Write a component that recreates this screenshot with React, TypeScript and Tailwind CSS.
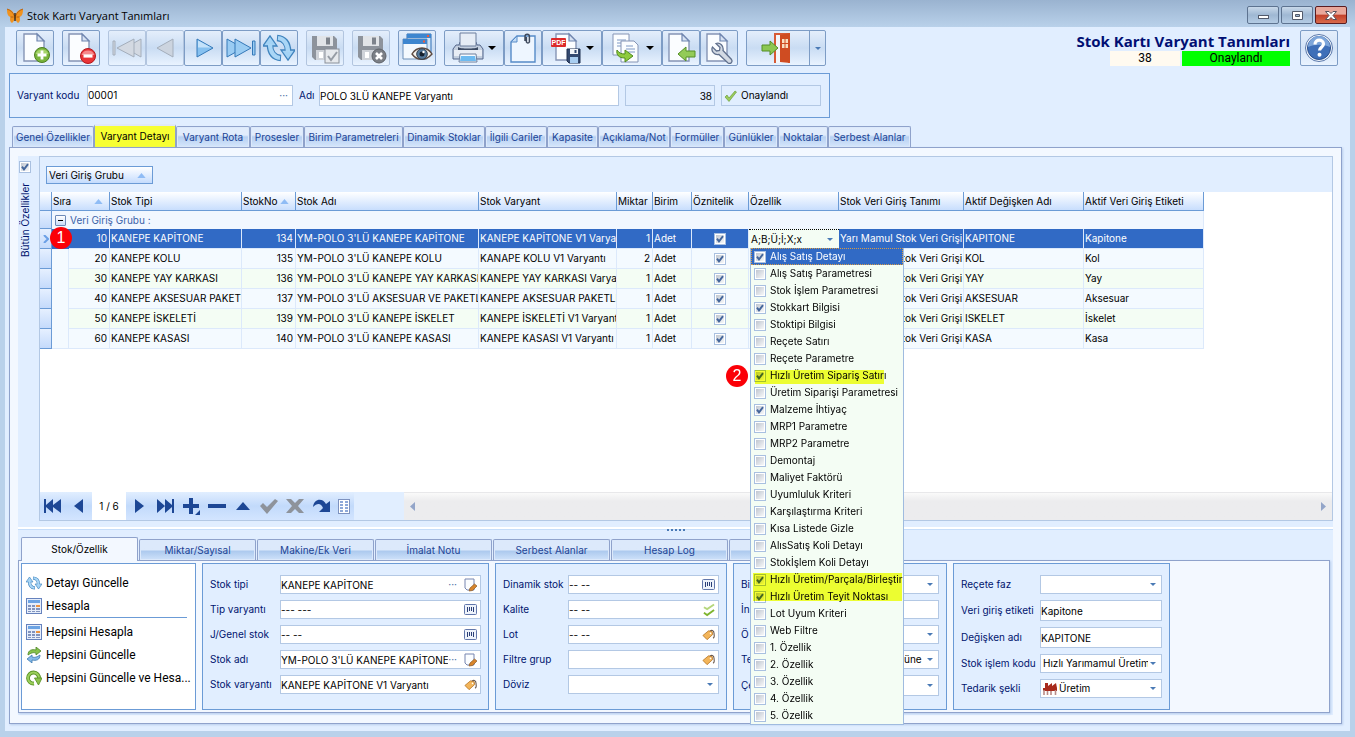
import React, { useState } from 'react';
import { clsx } from 'clsx';

type IconProps = { className?: string };

/* ---------- small shared pieces ---------- */

const Caret: React.FC<IconProps> = ({ className = 'text-[#4a7ab5]' }) => (
  <svg viewBox="0 0 8 4" className={clsx('h-[3px] w-[6px] shrink-0', className)}>
    <path d="M0 0h8L4 4z" fill="currentColor" />
  </svg>
);

const SortUp = () => (
  <svg viewBox="0 0 10 6" className="h-[5px] w-[9px] shrink-0">
    <path d="M0 6h10L5 0z" fill="#8fbcf5" />
  </svg>
);

const Check: React.FC<{ label: string; defaultChecked?: boolean; id?: string }> = ({ label, defaultChecked, id }) => (
  <span className="relative inline-block h-3 w-3 shrink-0 align-middle">
    <input
      id={id}
      type="checkbox"
      aria-label={label}
      defaultChecked={defaultChecked}
      className="peer block h-3 w-3 appearance-none border border-[#a9c0e0] bg-linear-to-br from-[#b9c0cb] to-white outline-1 -outline-offset-2 outline-white"
    />
    <svg viewBox="0 0 12 12" className="pointer-events-none absolute inset-0 hidden h-3 w-3 peer-checked:block">
      <path d="M3 5.6 5 8.4 9 3.2" fill="none" stroke="#44669b" strokeWidth="1.9" />
    </svg>
  </span>
);

const Badge: React.FC<{ n: number; className: string }> = ({ n, className }) => (
  <span
    className={clsx(
      "absolute z-20 flex h-[22px] w-[22px] items-center justify-center rounded-full bg-[#fb0007] font-['Liberation_Sans',sans-serif] text-base text-white",
      className
    )}
  >
    {n}
  </span>
);

/* ---------- toolbar icons ---------- */

const Page: React.FC<{ x?: number; y?: number; w?: number; h?: number }> = ({ x = 5, y = 2, w = 20, h = 27 }) => (
  <g>
    <path d={`M${x} ${y}h${w - 7}l7 7v${h - 7}h-${w}z`} fill="#fbfdff" stroke="#8594b5" strokeWidth="1.4" />
    <path d={`M${x + w - 7} ${y}v7h7z`} fill="#d7e2f2" stroke="#6f86b0" strokeWidth="1.2" />
  </g>
);

const Svg: React.FC<{ children: React.ReactNode; className?: string }> = ({ children, className = 'h-8 w-8' }) => (
  <svg viewBox="0 0 32 32" className={clsx('shrink-0', className)}>
    {children}
  </svg>
);

const NewIcon = () => (
  <Svg>
    <Page />
    <circle cx="23" cy="23" r="7.5" fill="#79b43c" stroke="#4d7f22" />
    <path d="M16.5 22a7 7 0 0 1 13 0z" fill="#a5d46b" />
    <path d="M23 18.5v9M18.5 23h9" stroke="#fff" strokeWidth="2.8" />
  </Svg>
);
const DeleteIcon = () => (
  <Svg>
    <Page x={4} />
    <circle cx="23" cy="24" r="7.5" fill="#e93438" stroke="#b3191e" />
    <path d="M16.5 23a7 7 0 0 1 13 0z" fill="#f68a8c" />
    <path d="M18.5 24h9" stroke="#fff" strokeWidth="3.2" />
  </Svg>
);
const FirstIcon = () => (
  <Svg>
    <g fill="#d3d9e2" stroke="#a4aebb">
      <path d="M2 9h2v14H2z" />
      <path d="M30 7v18l-16-9z" />
      <path d="M23 7v18L6 16z" />
    </g>
  </Svg>
);
const PrevIcon = () => (
  <Svg>
    <path d="M24 7v18L8 16z" fill="#ccd4df" stroke="#a4aebb" />
  </Svg>
);
const NextIcon = () => (
  <Svg>
    <path d="M10 7v18l16-9z" fill="#86c1f0" stroke="#3478b8" />
    <path d="M11 8.500v7h13z" fill="#c4e2fa" />
  </Svg>
);
const LastIcon = () => (
  <Svg>
    <g fill="#9accf3" stroke="#3478b8">
      <path d="M2 7v18l16-9z" />
      <path d="M10 7v18l16-9z" />
      <path d="M27.500 9H30v14h-2.500z" />
    </g>
  </Svg>
);
const RefreshShape = () => (
  <g>
    <g fill="none" stroke="#3f83bd" strokeWidth="6.500">
      <path d="M7 13c0 8 4 12.500 11 13" />
      <path d="M25 19c0-8-4-12.500-11-13" />
    </g>
    <path d="M0 14 7 4l7 10zM32 18l-7 10-7-10z" fill="#a4d3f5" stroke="#3f83bd" strokeWidth="1.300" />
    <g fill="none" stroke="#a9d6f6" strokeWidth="4.200">
      <path d="M7 12c0 8 4 13.500 10 14" />
      <path d="M25 20c0-8-4-13.500-10-14" />
    </g>
  </g>
);
const RefreshIcon = () => (
  <Svg>
    <RefreshShape />
  </Svg>
);
const Floppy = () => (
  <g>
    <path d="M3 4h22l3 3v21H6l-3-3z" fill="#8d939c" />
    <path d="M8 4h16v10H8z" fill="#e1e4e8" />
    <path d="M17 5.5h4v7h-4z" fill="#7d838c" />
    <path d="M7 18h18v10H7z" fill="#cfd3d9" />
    <path d="M10 20h4v6h-4z" fill="#fff" />
  </g>
);
const SaveIcon = () => (
  <Svg>
    <Floppy />
    <rect x="16" y="17" width="14" height="14" fill="#e6e9ed" stroke="#8a9099" />
    <path d="m19 24 3 4 6-8" fill="none" stroke="#969ca5" strokeWidth="2" />
  </Svg>
);
const SaveCancelIcon = () => (
  <Svg>
    <Floppy />
    <circle cx="24" cy="24" r="7" fill="#7b7f86" stroke="#5e6269" />
    <path d="m21 21 6 6m0-6-6 6" stroke="#fff" strokeWidth="2.6" />
  </Svg>
);
const ViewIcon = () => (
  <Svg>
    <path d="M6 2h24v20H6z" fill="#cfe4f8" stroke="#2f6fb5" />
    <path d="M6 2h24v4H6z" fill="#3e86cf" />
    <path d="M2 7h24v20H2z" fill="#f4f9fe" stroke="#6d8fb8" />
    <path d="M2 7h24v5H2z" fill="#3e86cf" />
    <path d="M22 8.5h2v2h-2zM26 3h2v2h-2z" fill="#ef5a3c" />
    <path d="M11 22c5-8 15-8 20 0-6 7-15 7-20 0z" fill="#f5f3ef" stroke="#5d4a40" strokeWidth="1.4" />
    <circle cx="21" cy="22" r="5.3" fill="#54799c" stroke="#333d4b" />
    <circle cx="21" cy="22" r="2.5" fill="#15202e" />
    <circle cx="22.5" cy="20" r="1.2" fill="#fff" />
  </Svg>
);
const PrintIcon = () => (
  <Svg className="h-8 w-8">
    <path d="M4 13h3l1-3h16l1 3h3l3 4v10H1V17z" fill="#c3cfdf" stroke="#53658a" />
    <path d="M8 1h16v13H8z" fill="#e6edf6" stroke="#6d7f9d" />
    <path d="M6 15c2 2 18 2 20 0v3H6z" fill="#3e4c64" />
    <path d="M2 18h28v6H2z" fill="#e8edf5" />
    <path d="M8 22h16l1 8H7z" fill="#f6fbff" stroke="#6d7f9d" />
    <path d="M9 24h14l1 5H8z" fill="#6dbaf0" />
  </Svg>
);
const ClipIcon = () => (
  <Svg>
    <path d="M10 4h18v26H4V10z" fill="#eef6ff" stroke="#568bc8" strokeWidth="1.4" />
    <path d="M10 4v6H4z" fill="#c5ddf6" stroke="#568bc8" />
    <path d="M18 9V4.500a2.200 2.200 0 0 1 4.400 0V10a1.700 1.700 0 0 1-3 0V5" fill="none" stroke="#3f4a5d" strokeWidth="1.5" />
  </Svg>
);
const PdfIcon = () => (
  <Svg>
    <Page x={6} y={2} w={20} h={26} />
    <rect x="1" y="6" width="15" height="9" rx="1" fill="#dc2a2a" />
    <text x="8.5" y="13" textAnchor="middle" fontSize="7" fontWeight="bold" fill="#fff" fontFamily="Liberation Sans, sans-serif">
      PDF
    </text>
    <path d="M17 17h13v14H19l-2-2z" fill="#33496f" stroke="#1f3050" />
    <path d="M20 17h8v5h-8z" fill="#f2f5f9" />
    <path d="M24.500 18h2v3h-2z" fill="#33496f" />
    <path d="M20 25h8v6h-8z" fill="#a8cdf0" />
  </Svg>
);
const CopyIcon = () => (
  <Svg>
    <path d="M3 2h16v21H3z" fill="#fbfdff" stroke="#8594b5" />
    <path d="M7 8h9M7 11h9M7 14h9" stroke="#7e99c4" />
    <path d="M11 9h13l4 4v17H11z" fill="#fbfdff" stroke="#8594b5" />
    <path d="M16 14h7M16 17h9M18 20h7" stroke="#7e99c4" />
    <path d="M7 18c2 3 4 4 8 4v-4l8 6-8 6v-4c-6 0-9-3-8-8z" fill="#8ecb3e" stroke="#4f8a1c" />
  </Svg>
);
const ImportIcon = () => (
  <Svg>
    <Page x={4} />
    <path d="M13 22l8-7v4h9v6h-9v4z" fill="#93cb58" stroke="#558f26" />
  </Svg>
);
const ToolIcon = () => (
  <Svg>
    <Page x={4} />
    <path
      d="M13 11.500l4 4-.5 3-3 .5-4-4c-2 4 2 8.500 6.500 7.500l9 8.500c2.500 1.500 5-1 3.500-3.500l-8.500-9c1-4.500-3-8.500-7-7z"
      fill="#d3dae4"
      stroke="#60708d"
      strokeWidth="1.3"
    />
  </Svg>
);
const ExitIcon = () => (
  <Svg>
    <path d="M15 31V2h14v29" fill="#f2f5fa" stroke="#d75a35" strokeWidth="2" />
    <path d="M20 3l10-2v30l-10-1z" fill="#cf4c22" />
    <path d="M22 7h6v9h-6z" fill="#f9dfc0" />
    <path d="M25 7v9M22 11.500h6" stroke="#cf4c22" />
    <path d="M2 13h8V9l8 7-8 7v-4H2z" fill="#8bc751" stroke="#558f26" />
  </Svg>
);
const HelpIcon = () => (
  <Svg>
    <circle cx="16" cy="16" r="13.5" fill="#f4f8fd" stroke="#5a78ab" />
    <circle cx="16" cy="16" r="11.5" fill="#3f6fb8" stroke="#2b4f8c" />
    <path d="M5 15a11 11 0 0 1 22 0c-7-3-15-3-22 0z" fill="#7ea6da" />
    <path d="M12 12.500c0-6 8.500-5.500 8.500-.5 0 3-4 3.500-4 6.500" fill="none" stroke="#fff" strokeWidth="3.2" />
    <circle cx="16.5" cy="22.800" r="2" fill="#fff" />
  </Svg>
);

/* ---------- field icons ---------- */

const NoteIcon = () => (
  <svg viewBox="0 0 14 14" className="h-[14px] w-[14px] shrink-0">
    <path d="M2 1h9v11H4l-2-2z" fill="#fbfdff" stroke="#7685b0" />
    <path d="M6 13l1-3 4.500-4L14 8l-4.500 4.500z" fill="#d8852c" stroke="#8a5b2b" strokeWidth=".7" />
  </svg>
);
const BarcodeIcon = () => (
  <svg viewBox="0 0 13 11" className="h-[11px] w-[13px] shrink-0">
    <rect x=".5" y=".5" width="12" height="10" rx="1" fill="#eef3fb" stroke="#6277ab" />
    <path d="M3.500 3v5M5.500 3v4M7.500 3v4M9.500 3v5" stroke="#2b3f77" />
  </svg>
);
const TagIcon = () => (
  <svg viewBox="0 0 14 12" className="h-[12px] w-[13px] shrink-0">
    <path d="M8 2.500c2-3 5-1 5 2s1 3-1 5" fill="none" stroke="#6b5a50" strokeWidth="1.2" />
    <path d="M1 6.500 7 1.500l4 1 .5 3L5.500 11z" fill="#f3b55a" stroke="#b06d1d" strokeWidth=".8" />
    <circle cx="9.2" cy="4.200" r=".9" fill="#fff" />
  </svg>
);
const DoubleCheckIcon = () => (
  <svg viewBox="0 0 13 14" className="h-[14px] w-[12px] shrink-0">
    <path d="m1 4 3.500 2L12 1" fill="none" stroke="#b5d67c" strokeWidth="2" />
    <path d="m1 10 3.500 2.500L12 7" fill="none" stroke="#7fb52f" strokeWidth="2" />
  </svg>
);
const FactoryIcon = () => (
  <svg viewBox="0 0 14 13" className="h-[13px] w-[14px] shrink-0">
    <path d="M2 6V1h3v3l4-3v3l4-3 1 5v3H0V6z" fill="#a82a1c" />
    <path d="M1 8v5M4.500 9v4M8 9v4M12.500 8v5" stroke="#b98a86" strokeWidth="1.6" />
  </svg>
);
const CalcIcon = () => (
  <svg viewBox="0 0 16 16" className="h-4 w-4 shrink-0">
    <rect x=".5" y=".5" width="15" height="15" fill="#e6eefb" stroke="#6682bd" />
    <path d="M2 2h12v3H2z" fill="#6ba3e3" />
    <path d="M2 7h3v2H2zM6 7h3v2H6zM2 10h3v2H2zM6 10h3v2H6zM10 10h4v2h-4zM2 13h3v1H2zM6 13h3v1H6zM10 13h4v1h-4z" fill="#8193bd" />
    <path d="M10 7h4v2h-4z" fill="#ec9441" />
  </svg>
);

/* ---------- toolbar ---------- */

type Tool = { name: string; icon: React.FC; off?: boolean; menu?: boolean; exit?: boolean };

const toolGroups: Tool[][] = [
  [{ name: 'Yeni', icon: NewIcon }],
  [{ name: 'Sil', icon: DeleteIcon }],
  [
    { name: 'İlk', icon: FirstIcon, off: true },
    { name: 'Önceki', icon: PrevIcon, off: true },
    { name: 'Sonraki', icon: NextIcon },
    { name: 'Son', icon: LastIcon },
    { name: 'Yenile', icon: RefreshIcon },
  ],
  [{ name: 'Kaydet', icon: SaveIcon, off: true }],
  [{ name: 'Vazgeç', icon: SaveCancelIcon, off: true }],
  [{ name: 'Görünüm', icon: ViewIcon }],
  [
    { name: 'Yazdır', icon: PrintIcon, menu: true },
    { name: 'Ekler', icon: ClipIcon },
    { name: 'PDF', icon: PdfIcon, menu: true },
    { name: 'Kopyala', icon: CopyIcon, menu: true },
    { name: 'İçe al', icon: ImportIcon },
    { name: 'Ayarlar', icon: ToolIcon },
  ],
  [{ name: 'Çıkış', icon: ExitIcon, exit: true }],
];

const Toolbar = () => (
  <header className="flex items-start pt-[3px] pr-3 pl-[11px]">
    <div className="flex gap-2">
      {toolGroups.map((group, i) => (
        <div key={i} className="flex">
          {group.map(({ name, icon: Icon, off, menu, exit }) => (
            <button
              key={name}
              aria-label={name}
              disabled={off}
              className={clsx(
                'flex h-9 items-center justify-center gap-1 rounded-[2px] border bg-linear-to-b from-[#e4eefb] via-[#c9dcf3] via-50% to-[#e9f3ff]',
                off ? 'border-[#b2c5df]' : 'border-[#7d9cc5]',
                menu ? 'w-[60px]' : exit ? 'w-20' : 'w-[38px]'
              )}
            >
              {exit ? (
                <>
                  <span className="flex flex-1 justify-center">
                    <Icon />
                  </span>
                  <span className="flex h-full w-4 items-center justify-center border-l border-[#7d9cc5]">
                    <Caret />
                  </span>
                </>
              ) : (
                <Icon />
              )}
              {menu && (
                <svg viewBox="0 0 8 4" className="h-1 w-2 shrink-0">
                  <path d="M0 0h8L4 4z" />
                </svg>
              )}
            </button>
          ))}
        </div>
      ))}
    </div>
    <div className="ml-auto flex flex-col items-end">
      <h1 className="h-[21px] font-['Open_Sans',sans-serif] text-[15px] leading-[22px] font-bold text-[#000f73]">Stok Kartı Varyant Tanımları</h1>
      <div className="flex gap-0.5 text-center font-['Roboto',sans-serif] text-xs leading-[15px] text-black">
        <span className="h-[15px] w-[70px] bg-[#fffaf0]">38</span>
        <span className="h-[15px] w-[108px] bg-[#00ff00]">Onaylandı</span>
      </div>
    </div>
    <button
      aria-label="Yardım"
      className="ml-2.5 flex h-9 w-[38px] items-center justify-center rounded-[2px] border border-[#7d9cc5] bg-linear-to-b from-[#e4eefb] via-[#d3e3f7] to-[#e9f3ff]"
    >
      <HelpIcon />
    </button>
  </header>
);

/* ---------- main tabs ---------- */

const tabs = [
  ['Genel Özellikler', 'w-[82px]'],
  ['Varyant Detayı', 'w-[82px]'],
  ['Varyant Rota', 'w-[74px]'],
  ['Prosesler', 'w-[54px]'],
  ['Birim Parametreleri', 'w-[99px]'],
  ['Dinamik Stoklar', 'w-[82px]'],
  ['İlgili Cariler', 'w-[62px]'],
  ['Kapasite', 'w-[51px]'],
  ['Açıklama/Not', 'w-[72px]'],
  ['Formüller', 'w-[54px]'],
  ['Günlükler', 'w-[54px]'],
  ['Noktalar', 'w-[50px]'],
  ['Serbest Alanlar', 'w-[83px]'],
];

/* ---------- detail grid ---------- */

const columns = [
  ['Stok Tipi', 'w-[132px]'],
  ['StokNo', 'w-[54px]'],
  ['Stok Adı', 'w-[183px]'],
  ['Stok Varyant', 'w-[138px]'],
  ['Miktar', 'w-[36px]'],
  ['Birim', 'w-[39px]'],
  ['Öznitelik', 'w-[57px]'],
  ['Özellik', 'w-[90px]'],
  ['Stok Veri Giriş Tanımı', 'w-[125px]'],
  ['Aktif Değişken Adı', 'w-[120px]'],
  ['Aktif Veri Giriş Etiketi', 'w-[120px]'],
];

const rows = [
  [10, 'KANEPE KAPİTONE', 134, "YM-POLO 3'LÜ KANEPE KAPİTONE", 'KANEPE KAPİTONE V1 Varyantı', 1, 'KAPITONE', 'Kapitone'],
  [20, 'KANEPE KOLU', 135, "YM-POLO 3'LÜ KANEPE KOLU", 'KANAPE KOLU V1 Varyantı', 2, 'KOL', 'Kol'],
  [30, 'KANEPE YAY KARKASI', 136, "YM-POLO 3'LÜ KANEPE YAY KARKASI", 'KANEPE YAY KARKASI Varyantı', 1, 'YAY', 'Yay'],
  [40, 'KANEPE AKSESUAR PAKETİ', 137, "YM-POLO 3'LÜ AKSESUAR VE PAKETLEME", 'KANEPE AKSESUAR PAKETLEME', 1, 'AKSESUAR', 'Aksesuar'],
  [50, 'KANEPE İSKELETİ', 139, "YM-POLO 3'LÜ KANEPE İSKELET", 'KANEPE İSKELETİ V1 Varyantı', 1, 'ISKELET', 'İskelet'],
  [60, 'KANEPE KASASI', 140, "YM-POLO 3'LÜ KANEPE KASASI", 'KANEPE KASASI V1 Varyantı', 1, 'KASA', 'Kasa'],
];

const options: [string, boolean][] = [
  ['Alış Satış Detayı', true],
  ['Alış Satış Parametresi', false],
  ['Stok İşlem Parametresi', false],
  ['Stokkart Bilgisi', true],
  ['Stoktipi Bilgisi', false],
  ['Reçete Satırı', false],
  ['Reçete Parametre', false],
  ['Hızlı Üretim Sipariş Satırı', true],
  ['Üretim Siparişi Parametresi', false],
  ['Malzeme İhtiyaç', true],
  ['MRP1 Parametre', false],
  ['MRP2 Parametre', false],
  ['Demontaj', false],
  ['Maliyet Faktörü', false],
  ['Uyumluluk Kriteri', false],
  ['Karşılaştırma Kriteri', false],
  ['Kısa Listede Gizle', false],
  ['AlısSatış Koli Detayı', false],
  ['Stokİşlem Koli Detayı', false],
  ['Hızlı Üretim/Parçala/Birleştir', true],
  ['Hızlı Üretim Teyit Noktası', true],
  ['Lot Uyum Kriteri', false],
  ['Web Filtre', false],
  ['1. Özellik', false],
  ['2. Özellik', false],
  ['3. Özellik', false],
  ['4. Özellik', false],
  ['5. Özellik', false],
];

const PropertyMenu = () => (
  <div className="absolute top-[18px] left-px z-10 w-[154px] border border-t-0 border-[#9fbbdf] bg-[#f4fdf4] text-left text-black">
    {options.map(([name, on], i) => (
      <label
        key={name}
        className={clsx(
          'flex h-[17px] items-center gap-1 pl-[3px] whitespace-nowrap',
          i === 0 && 'bg-[#316ac5] text-white outline-1 -outline-offset-1 outline-[#d59a4a] outline-dotted'
        )}
      >
        <Check label={name} defaultChecked={on} />
        {name}
      </label>
    ))}
    <div className="pointer-events-none absolute top-[122px] left-1 h-3.5 w-[129px] bg-[#f7ff33] mix-blend-multiply" />
    <div className="pointer-events-none absolute top-[325px] left-0.5 h-7 w-[149px] bg-[#f7ff33] mix-blend-multiply" />
    <Badge n={2} className="top-[117px] -left-[25px]" />
  </div>
);

const cell = 'overflow-hidden border-r border-b border-[#dce9fb] pr-0.5 pl-px whitespace-nowrap';
const head = 'h-[19px] overflow-hidden border-r border-b border-[#6b9bd6] pr-0.5 pl-px text-left font-normal whitespace-nowrap';
const rail = 'border-r border-b border-[#6b9bd6] bg-linear-to-b from-[#e6f0ff] to-[#c4dafb]';

const DetailGrid = () => {
  const [open, setOpen] = useState(true);

  return (
    <table className="w-[1164px] table-fixed border-separate border-spacing-0 text-black">
      <colgroup>
        <col className="w-3" />
        <col className="w-[17px]" />
        <col className="w-[41px]" />
        {columns.map(([name, width]) => (
          <col key={name} className={width} />
        ))}
      </colgroup>
      <thead>
        <tr className="bg-linear-to-b from-white to-[#c5dcfd]">
          <th className={head} aria-label="Satır" />
          <th className={head} colSpan={2}>
            <span className="flex items-center justify-between pr-1">
              Sıra <SortUp />
            </span>
          </th>
          {columns.map(([name]) => (
            <th key={name} className={head}>
              {name === 'StokNo' ? (
                <span className="flex items-center justify-between pr-1">
                  {name} <SortUp />
                </span>
              ) : (
                name
              )}
            </th>
          ))}
        </tr>
      </thead>
      <tbody>
        <tr className="h-[18px] bg-[#f1f7ff] text-[#3b62a8]">
          <td className={rail} />
          <td colSpan={13} className="border-r border-[#dce9fb] pl-[3px]">
            <span className="flex items-center gap-1">
              <button
                aria-label="Grubu kapat"
                className="flex h-[11px] w-[11px] items-center justify-center rounded-[1px] border border-[#6d8ab8] bg-linear-to-b from-white to-[#c9dcf8]"
              >
                <span className="h-px w-[5px] bg-black" />
              </button>
              Veri Giriş Grubu :
            </span>
          </td>
        </tr>
        {rows.map(([no, type, code, name, variant, qty, variable, tag], i) => {
          const selected = i === 0;
          return (
            <tr
              key={no}
              className={clsx(
                'h-5',
                selected ? 'bg-[#316ac5] text-white' : i % 2 ? 'bg-[#f4faff]' : 'bg-[#f4fdf4]'
              )}
            >
              <td className={clsx(rail, 'relative')}>
                {selected && (
                  <>
                    <svg viewBox="0 0 6 8" className="ml-[3px] h-2 w-1.5">
                      <path d="M1 0l4 4-4 4" fill="none" stroke="#6a9fe6" strokeWidth="2" />
                    </svg>
                    <Badge n={1} className="-top-0.5 left-2.5" />
                  </>
                )}
              </td>
              <td className={clsx(!selected && 'border-r border-[#dce9fb] bg-[#f4faff]', i === 5 && 'border-b')} />
              <td className={clsx(cell, 'text-right')}>{no}</td>
              <td className={cell}>{type}</td>
              <td className={clsx(cell, 'text-right')}>{code}</td>
              <td className={cell}>{name}</td>
              <td className={cell}>{variant}</td>
              <td className={clsx(cell, 'text-right')}>{qty}</td>
              <td className={cell}>Adet</td>
              <td className={clsx(cell, 'text-center')}>
                <Check label={`Öznitelik ${no}`} defaultChecked />
              </td>
              {selected ? (
                <td className="relative border-t border-dotted border-black bg-[#f4fdf4] p-0 text-black">
                  <button
                    aria-expanded={open}
                    onClick={() => setOpen(!open)}
                    className="flex h-[18px] w-full items-center justify-between pr-1.5 pl-0.5"
                  >
                    A;B;Ü;İ;X;x <Caret />
                  </button>
                  {open && <PropertyMenu />}
                </td>
              ) : (
                <td className={cell} />
              )}
              <td className="border-r border-b border-[#dce9fb] pl-px whitespace-nowrap">Yarı Mamul Stok Veri Grişi</td>
              <td className={cell}>{variable}</td>
              <td className={cell}>{tag}</td>
            </tr>
          );
        })}
      </tbody>
    </table>
  );
};

/* record navigator under the grid */
const navIcons: [string, string, string][] = [
  ['Sonraki', 'M5 2v14l9-7z', '#1d4795'],
  ['Son', 'M1 2v14l8-7zM9 2v14l7-6v6h2V2h-2v6z', '#1d4795'],
  ['Ekle', 'M7 1h4v6h6v4h-6v6H7v-6H1V7h6zM18 13v5h-5z', '#1d4795'],
  ['Çıkar', 'M0 7h18v4H0z', '#1d4795'],
  ['Düzenle', 'M2 13h14L9 5z', '#1d4795'],
  ['Onayla', 'M0 9l3-3 4 4 8-8 3 2L7 17z', '#8e939b'],
  ['İptal', 'M0 2h5l4 4 4-4h5l-6 7 6 7h-5l-4-4-4 4H0l6-7z', '#8e939b'],
  ['Tazele', 'M1 10C2 1 11 1 14 7l4-3v11H7l4-4c-2-5-6-5-10-1z', '#1d4795'],
];

const NavButton: React.FC<{ name: string; d: string; fill: string }> = ({ name, d, fill }) => (
  <button aria-label={name} className="flex w-[26px] items-center justify-center">
    <svg viewBox="0 0 18 18" className="h-[18px] w-[18px]">
      <path d={d} fill={fill} />
    </svg>
  </button>
);

const Navigator = () => (
  <div className="flex h-7 bg-[#e1eeff]">
    <div className="flex w-[314px] bg-linear-to-b from-[#e1eeff] via-[#c2dafb] to-[#d3e5ff]">
      <NavButton name="İlk" d="M0 2h2v6l7-6v6l8-6v14l-8-6v6l-7-6v6H0z" fill="#1d4795" />
      <NavButton name="Önceki" d="M13 2v14L4 9z" fill="#1d4795" />
      <span className="flex w-[34px] items-center justify-center bg-white text-black">1 / 6</span>
      {navIcons.map(([name, d, fill]) => (
        <NavButton key={name} name={name} d={d} fill={fill} />
      ))}
      <button aria-label="Form görünümü" className="flex flex-1 items-center pl-1">
        <svg viewBox="0 0 12 15" className="h-[15px] w-3">
          <rect x=".5" y=".5" width="11" height="14" fill="#fff" stroke="#7d92bf" />
          <path d="M2 3h3M2 6h3M2 9h3M2 12h3M7 3h3M7 6h3M7 9h3M7 12h3" stroke="#8ea8d8" strokeWidth="2" />
        </svg>
      </button>
    </div>
    <div className="ml-[50px] flex flex-1 items-center justify-between border-t border-[#e8e8ea] bg-linear-to-b from-[#fafafa] to-[#ececee] to-30% px-1.5 text-[#93a5c9]">
      <svg viewBox="0 0 5 9" className="h-[9px] w-[5px]">
        <path d="M5 0v9L0 4.500z" fill="currentColor" />
      </svg>
      <svg viewBox="0 0 5 9" className="h-[9px] w-[5px]">
        <path d="M0 0v9l5-4.500z" fill="currentColor" />
      </svg>
    </div>
  </div>
);

/* ---------- lower form ---------- */

const lowerTabs = ['Stok/Özellik', 'Miktar/Sayısal', 'Makine/Ek Veri', 'İmalat Notu', 'Serbest Alanlar', 'Hesap Log', ''];

type FieldProps = {
  id: string;
  label: string;
  value?: string;
  width: string;
  icon?: React.FC;
  lead?: React.FC;
  dots?: boolean;
  select?: boolean;
  tall?: boolean;
};

const Field: React.FC<FieldProps> = ({ id, label, value = '', width, icon: Icon, lead: Lead, dots, select, tall }) => (
  <div className="flex items-center justify-between">
    <label htmlFor={id} className="whitespace-nowrap">
      {label}
    </label>
    <span className={clsx('flex shrink-0 items-center border border-[#b3c8e4] bg-white pr-[3px] text-black', width, tall ? 'h-[21px]' : 'h-[19px]')}>
      {Lead && (
        <span className="pl-0.5">
          <Lead />
        </span>
      )}
      {select ? (
        <>
          <select id={id} defaultValue={value} className="h-full min-w-0 flex-1 appearance-none bg-transparent pl-0.5 outline-none">
            <option value={value}>{value}</option>
          </select>
          <span className="px-0.5">
            <Caret />
          </span>
        </>
      ) : (
        <input id={id} defaultValue={value} className="h-full min-w-0 flex-1 bg-transparent outline-none" />
      )}
      {dots && <span className="pr-1.5 text-[#4a6ea8]">···</span>}
      {Icon && <Icon />}
    </span>
  </div>
);

const fieldGroups: { width: string; fields: FieldProps[] }[] = [
  {
    width: 'w-[287px]',
    fields: [
      { id: 'stok-tipi', label: 'Stok tipi', value: 'KANEPE KAPİTONE', width: 'w-[201px]', icon: NoteIcon, dots: true },
      { id: 'tip-varyanti', label: 'Tip varyantı', value: '--- ---', width: 'w-[201px]', icon: BarcodeIcon },
      { id: 'genel-stok', label: 'J/Genel stok', value: '-- --', width: 'w-[201px]', icon: BarcodeIcon },
      { id: 'stok-adi', label: 'Stok adı', value: "YM-POLO 3'LÜ KANEPE KAPİTONE", width: 'w-[201px]', icon: NoteIcon, dots: true },
      { id: 'stok-varyanti', label: 'Stok varyantı', value: 'KANEPE KAPİTONE V1 Varyantı', width: 'w-[201px]', icon: TagIcon },
    ],
  },
  {
    width: 'w-[232px]',
    fields: [
      { id: 'dinamik-stok', label: 'Dinamik stok', value: '-- --', width: 'w-[151px]', icon: BarcodeIcon },
      { id: 'kalite', label: 'Kalite', value: '-- --', width: 'w-[151px]', icon: DoubleCheckIcon },
      { id: 'lot', label: 'Lot', value: '-- --', width: 'w-[151px]', icon: TagIcon },
      { id: 'filtre-grup', label: 'Filtre grup', width: 'w-[151px]', icon: TagIcon },
      { id: 'doviz', label: 'Döviz', width: 'w-[151px]', select: true },
    ],
  },
  {
    width: 'w-[214px]',
    fields: [
      { id: 'f1', label: 'Bi', width: 'w-[120px]', select: true },
      { id: 'f2', label: 'İn', width: 'w-[120px]' },
      { id: 'f3', label: 'Ö', width: 'w-[120px]', select: true },
      { id: 'f4', label: 'Te', value: 'üne', width: 'w-[38px]', select: true },
      { id: 'f5', label: 'Çe', width: 'w-[120px]', select: true, tall: true },
    ],
  },
  {
    width: 'w-[217px]',
    fields: [
      { id: 'recete-faz', label: 'Reçete faz', width: 'w-[122px]', select: true },
      { id: 'etiket', label: 'Veri giriş etiketi', value: 'Kapitone', width: 'w-[122px]', tall: true },
      { id: 'degisken', label: 'Değişken adı', value: 'KAPITONE', width: 'w-[122px]', tall: true },
      { id: 'islem-kodu', label: 'Stok işlem kodu', value: 'Hızlı Yarımamul Üretim', width: 'w-[122px]', select: true },
      { id: 'tedarik', label: 'Tedarik şekli', value: 'Üretim', width: 'w-[122px]', select: true, lead: FactoryIcon },
    ],
  },
];

const MiniRefresh: React.FC = () => (
  <Svg className="h-4 w-4">
    <RefreshShape />
  </Svg>
);
const SwapIcon = () => (
  <svg viewBox="0 0 16 16" className="h-4 w-4 shrink-0">
    <path d="M2 8c0-5 4-6 8-5V0l5 4-5 4V6C7 5 5 6 2 8z" fill="#86c24a" stroke="#4c8524" strokeWidth=".8" />
    <path d="M14 8c0 5-4 6-8 5v3l-5-4 5-4v2c3 1 5 0 8-2z" fill="#84b9e8" stroke="#3d78b0" strokeWidth=".8" />
  </svg>
);
const GreenCycleIcon = () => (
  <svg viewBox="0 0 16 16" className="h-4 w-4 shrink-0">
    <path d="M8 13.500A5.500 5.500 0 1 1 13 8.500" fill="none" stroke="#5b9427" strokeWidth="3.800" />
    <path d="M8 13.500A5.500 5.500 0 1 1 13 8.500" fill="none" stroke="#9bcf5c" strokeWidth="2" />
    <path d="M8.500 8H16l-3.500 7z" fill="#8bc24d" stroke="#5b9427" strokeWidth=".9" />
  </svg>
);

const actions: [string, React.FC][] = [
  ['Detayı Güncelle', MiniRefresh],
  ['Hesapla', CalcIcon],
  ['Hepsini Hesapla', CalcIcon],
  ['Hepsini Güncelle', SwapIcon],
  ['Hepsini Güncelle ve Hesa...', GreenCycleIcon],
];

const LowerForm = () => (
  <section className="pb-0.5">
    <nav role="tablist" className="flex items-end gap-px pl-[3px]">
      {lowerTabs.map((name, i) => (
        <button
          key={i}
          role="tab"
          aria-selected={i === 0}
          className={clsx(
            'w-[117px] rounded-t-[2px] border border-b-0',
            i === 0
              ? 'relative -mb-px h-6 border-[#8fa2cb] bg-[#f3f8ff] text-black'
              : 'h-[21px] border-[#8fa2cb] bg-linear-to-b from-[#dce9fb] from-50% via-[#acc9ee] via-55% to-[#cfe2fa] text-[#1c4495] shadow-[inset_0_0_0_1px_#dce9fb]'
          )}
        >
          {name}
        </button>
      ))}
    </nav>
    <div className="mr-[3px] flex gap-1.5 border border-[#8fa2cb] bg-[#f3f8ff] p-0.5 shadow-[1px_1px_2px_#b9cdec]">
      <div className="flex w-[175px] flex-col border border-[#6b9bd6] bg-white pt-[7px] pl-1 font-['Roboto',sans-serif] text-xs text-black">
        {actions.map(([name, Icon], i) => (
          <React.Fragment key={name}>
            {i === 2 && <hr className="mr-2 mb-0.5 ml-[21px] border-[#6b9bd6]" />}
            <button className="flex h-[23px] items-center gap-1 whitespace-nowrap">
              <Icon />
              {name}
            </button>
          </React.Fragment>
        ))}
      </div>
      {fieldGroups.map((group, i) => (
        <div key={i} className={clsx('flex flex-col gap-1.5 border border-[#6b9bd6] bg-[#e1eeff] px-[7px] py-[11px] text-[#00146e]', group.width)}>
          {group.fields.map((field) => (
            <Field key={field.id} {...field} />
          ))}
        </div>
      ))}
    </div>
  </section>
);

/* ---------- window ---------- */

const Titlebar = () => (
  <div className="flex h-[27px] items-start bg-linear-to-b from-[#9ab3d0] to-[#b9d1ea] pl-[7px]">
    <svg viewBox="0 0 16 16" className="mt-2 h-4 w-4">
      <path d="M7.500 8C7 4 4 1 0 1c0 4 .5 7 3.500 8C2.500 11 3 14 5 15c1.500-1 2.500-3 3-6 .5 3 1.500 5 3 6 2-1 2.500-4 1.500-6 3-1 3.500-4 3.500-8-4 0-7 3-7.500 7z" fill="#f0921e" />
      <path d="M0 1c3 1 6 3 7.500 7M16 1c-3 1-6 3-7.500 7M3.500 9h3M12.500 9h-3" fill="none" stroke="#a8560c" strokeWidth=".8" />
      <path d="M8 5v8" stroke="#3a2108" strokeWidth="1.4" />
    </svg>
    <span className="mt-[7px] ml-1 font-['Open_Sans',sans-serif] leading-[17px] text-black">Stok Kartı Varyant Tanımları</span>
    <div className="mt-1.5 mr-2 ml-auto flex gap-0.5">
      <button aria-label="Küçült" className="flex h-[18px] w-8 items-end justify-center rounded-[2px] border border-[#5d7390] bg-linear-to-b from-[#c9d9ea] via-[#9fb8d3] via-50% to-[#b4cce4] pb-1">
        <span className="h-1 w-[11px] border border-[#525a6b] bg-white" />
      </button>
      <button aria-label="Büyüt" className="flex h-[18px] w-8 items-center justify-center rounded-[2px] border border-[#5d7390] bg-linear-to-b from-[#c9d9ea] via-[#9fb8d3] via-50% to-[#b4cce4]">
        <svg viewBox="0 0 11 9" className="h-[9px] w-[11px]">
          <path d="M.5.500h10v8H.5zM3.500 3.500v2h4v-2z" fill="#fff" stroke="#525a6b" fillRule="evenodd" />
        </svg>
      </button>
      <button aria-label="Kapat" className="flex h-[18px] w-8 items-center justify-center rounded-[2px] border border-[#5b1c20] bg-linear-to-b from-[#e9a89b] from-45% via-[#c2402a] via-50% to-[#d9694a]">
        <svg viewBox="0 0 12 9" className="h-[9px] w-3">
          <path d="M.5.500h3.500L6 2.500l2-2h3.500L8 4.500l3.500 4H8l-2-2-2 2H.5l3.500-4z" fill="#fff" stroke="#57515b" />
        </svg>
      </button>
    </div>
  </div>
);

export default function App() {
  const [tab, setTab] = useState(1);

  return (
    <div className="flex min-h-screen w-full flex-col overflow-hidden bg-[#b9d1ea] text-[11px]">
      <Titlebar />
      <main className="mx-[5px] mb-1.5 flex flex-1 flex-col bg-[#e1eeff] font-['Inter','Noto_Sans',sans-serif] text-[10px] leading-[15px]">
        <Toolbar />

        <form className="mt-[7px] ml-1 flex h-[45px] w-[821px] items-center border border-[#6b9bd6] px-[7px] text-[#00146e]">
          <label htmlFor="kod" className="w-[70px] whitespace-nowrap">
            Varyant kodu
          </label>
          <span className="flex h-[21px] w-[206px] items-center border border-[#b3c8e4] bg-white pr-1">
            <input id="kod" defaultValue="00001" className="min-w-0 flex-1 text-black outline-none" />
            <span className="text-[#4a6ea8]">···</span>
          </span>
          <label htmlFor="adi" className="ml-1.5 w-5">
            Adı
          </label>
          <input id="adi" defaultValue="POLO 3LÜ KANEPE Varyantı" className="h-[21px] w-[300px] border border-[#b3c8e4] bg-white text-black outline-none" />
          <input aria-label="No" readOnly value="38" className="ml-1.5 h-[21px] w-[90px] border border-[#b3c8e4] pr-0.5 text-right text-black outline-none" />
          <span className="ml-1.5 flex h-[21px] w-[100px] items-center gap-1 border border-[#b3c8e4] pl-0.5 text-black">
            <svg viewBox="0 0 13 12" className="h-3 w-[13px]">
              <path d="M1 7l2-2 2 3 6-7 1.500 1L5 11.500z" fill="#9ccc5e" stroke="#5f962c" strokeWidth=".6" />
            </svg>
            Onaylandı
          </span>
        </form>

        <nav role="tablist" className="mt-1.5 flex h-[23px] items-end pl-[7px]">
          {tabs.map(([name, width], i) => (
            <button
              key={name}
              role="tab"
              aria-selected={i === tab}
              onClick={() => setTab(i)}
              className={clsx(
                'rounded-t-[2px] border border-b-0 border-[#8fa2cb] text-center whitespace-nowrap',
                width,
                i === tab
                  ? 'h-[23px] border-t-2 border-t-[#dfe8f8] bg-[#f7ff33] text-black'
                  : 'h-[21px] bg-linear-to-b from-[#e1ecfc] from-40% via-[#b7d0f2] via-50% to-[#d5e6fb] text-[#1c4495] shadow-[inset_0_0_0_1px_#dce9fb]'
              )}
            >
              {name}
            </button>
          ))}
        </nav>

        <div className="mr-2 mb-[7px] ml-1 flex flex-1 flex-col border border-[#8fa2cb] bg-[#f3f8ff] p-2 shadow-[1px_1px_2px_#b9cdec]">
          <div className="flex flex-1">
            <div className="flex w-[21px] flex-col items-center bg-[#e1eeff] pt-[5px] pr-[7px]">
              <Check id="butun" label="Bütün Özellikler" defaultChecked />
              <label htmlFor="butun" className="mt-2.5 rotate-180 whitespace-nowrap text-[#00146e] [writing-mode:vertical-rl]">
                Bütün Özellikler
              </label>
            </div>
            <div className="flex min-w-0 flex-1 flex-col border border-[#b3c8e4] bg-white">
              <div className="h-[35px] bg-[#e1eeff] pt-[9px] pl-1.5">
                <button className="flex h-[18px] w-[107px] items-center justify-between border border-[#6b9bd6] bg-linear-to-b from-white to-[#c5dcfd] pr-1.5 pl-0.5 text-black">
                  Veri Giriş Grubu <SortUp />
                </button>
              </div>
              <div className="flex-1">
                <DetailGrid />
              </div>
              <Navigator />
            </div>
          </div>

          <div className="bg-[#e1eeff]">
            <div className="mt-1.5 flex h-[3px] justify-center gap-0.5 border-t-2 border-b border-t-white border-b-[#c5ddfa]">
              {[0, 1, 2, 3, 4].map((n) => (
                <span key={n} className="h-0.5 w-0.5 bg-[#4a7ab5]" />
              ))}
            </div>
            <div className="h-[7px]" />
            <LowerForm />
          </div>
        </div>
      </main>
    </div>
  );
}
